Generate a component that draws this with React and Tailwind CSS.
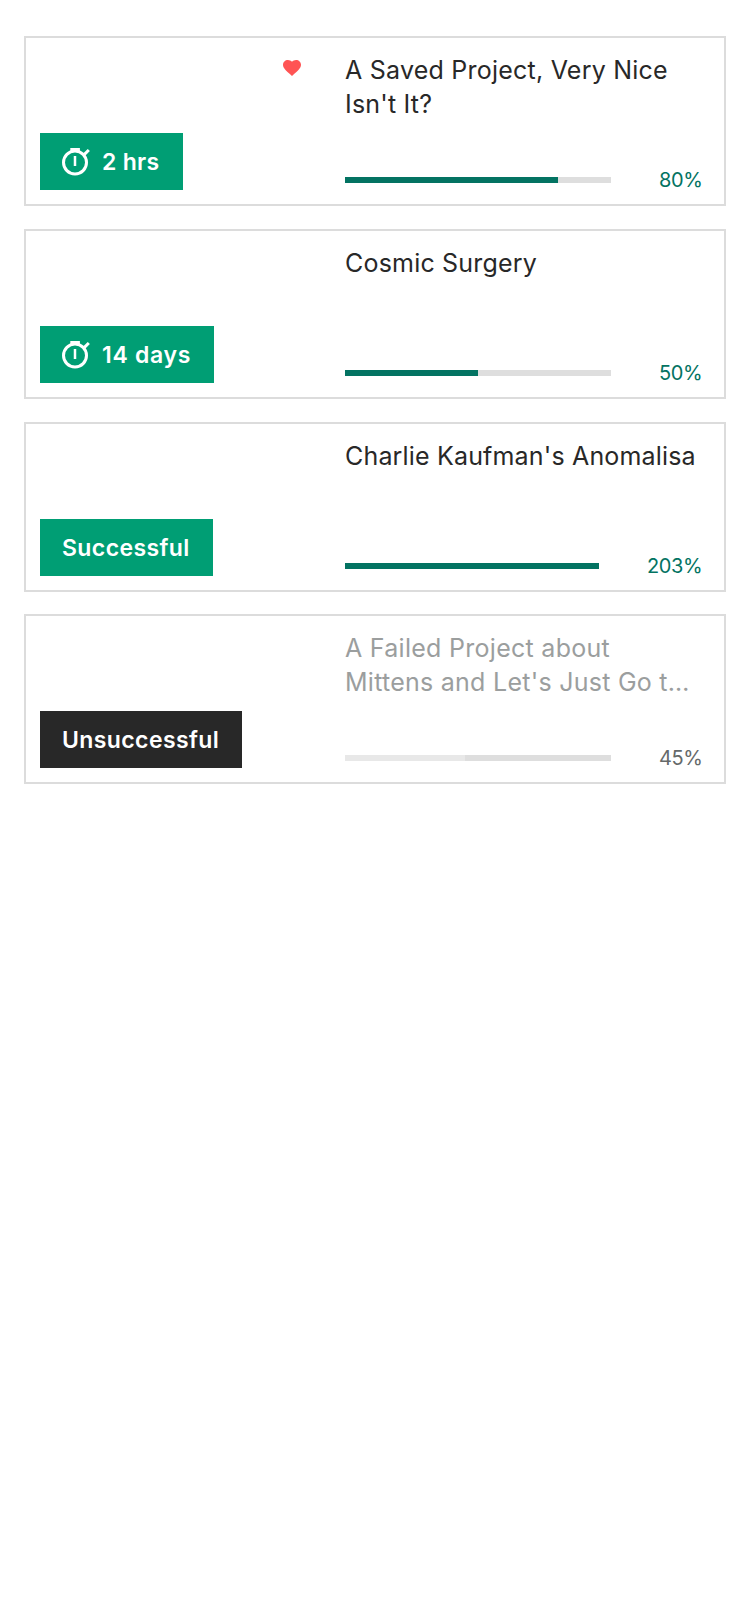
const projects = [
  {
    lines: [
      { text: "A Saved Project, Very Nice", tracking: "tracking-[0.23px]" },
      { text: "Isn't It?", tracking: "tracking-[0.2px]" },
    ],
    badge: "2 hrs",
    badgeStyle: "w-[143px] tracking-[0.3px]",
    timer: true,
    saved: true,
    percent: 80,
    offset: "mt-0",
  },
  {
    lines: [{ text: "Cosmic Surgery", tracking: "tracking-[0.2px]" }],
    badge: "14 days",
    badgeStyle: "w-[174px] tracking-[0.7px]",
    timer: true,
    percent: 50,
    offset: "mt-[23px]",
  },
  {
    lines: [{ text: "Charlie Kaufman's Anomalisa", tracking: "tracking-[0.17px]" }],
    badge: "Successful",
    badgeStyle: "w-[173px] tracking-[0.4px]",
    percent: 203,
    offset: "mt-[23px]",
  },
  {
    lines: [
      { text: "A Failed Project about", tracking: "tracking-[0.28px]" },
      { text: "Mittens and Let's Just Go t…", tracking: "tracking-[0.26px]" },
    ],
    badge: "Unsuccessful",
    badgeStyle: "w-[202px] tracking-[0.4px]",
    failed: true,
    percent: 45,
    offset: "mt-[22px]",
  },
];

function Stopwatch() {
  return (
    <svg className="mr-3 mb-[3px] h-[31px] w-[28px] shrink-0" viewBox="0 0 28 31" fill="none" stroke="white">
      <circle cx="13" cy="16.5" r="11.5" strokeWidth="3" />
      <path d="M8.3 3.6h9.6" strokeWidth="3.2" />
      <path d="M22.4 8.4l4.4-4.4" strokeWidth="3" />
      <path d="M13 10v10" strokeWidth="2.5" />
    </svg>
  );
}

function Heart() {
  return (
    <svg className="mt-[22px] mr-[44px] h-[16px] w-[18px]" viewBox="2 3 20 18.35" preserveAspectRatio="none" fill="#ff5454">
      <path d="M12 21.35l-1.45-1.32C5.4 15.36 2 12.28 2 8.5 2 5.42 4.42 3 7.5 3c1.74 0 3.41.81 4.5 2.09C13.09 3.81 14.76 3 16.5 3 19.58 3 22 5.42 22 8.5c0 3.78-3.4 6.86-8.55 11.54L12 21.35z" />
    </svg>
  );
}

function ProjectCard({ project }) {
  const { lines, badge, badgeStyle, timer, saved, failed, percent, offset } = project;
  return (
    <article className={`flex h-[170px] border-2 border-[#dcdcdc] bg-white ${offset}`}>
      <div className="flex w-[319px] shrink-0 flex-col justify-between pb-[14px] pl-[14px]">
        <div className="flex justify-end">{saved && <Heart />}</div>
        <div
          className={`flex h-[57px] items-center pt-[2px] pl-[22px] text-[23px] font-semibold whitespace-nowrap text-white ${badgeStyle} ${failed ? "bg-[#282828]" : "bg-[#009e74]"}`}
        >
          {timer && <Stopwatch />}
          {badge}
        </div>
      </div>
      <div className="flex min-w-0 flex-1 flex-col justify-between pt-[15px] pr-[22px] pb-[12px]">
        <h2 className={`text-[25px] leading-[34px] whitespace-nowrap ${failed ? "text-[#9b9e9e]" : "text-[#282828]"}`}>
          {lines.map((line) => (
            <span key={line.text} className={`block ${line.tracking}`}>
              {line.text}
            </span>
          ))}
        </h2>
        <div className="flex h-6 items-center gap-12">
          <div className="h-[6px] flex-1 bg-[#dedede]">
            <div
              className={`h-full ${failed ? "bg-[#e8e8e8]" : "bg-[#037362]"}`}
              style={{ width: `${Math.min(percent, 100)}%` }}
            />
          </div>
          <span
            className={`text-[20px] leading-6 tracking-[-0.4px] ${percent > 99 ? "w-[55px]" : "w-[43px]"} ${failed ? "text-[#656969]" : "text-[#037362]"}`}
          >
            {percent}%
          </span>
        </div>
      </div>
    </article>
  );
}

export default function App() {
  return (
    <main className="min-h-screen bg-white px-6 pt-9 font-['Inter',sans-serif]">
      {projects.map((project) => (
        <ProjectCard key={project.badge} project={project} />
      ))}
    </main>
  );
}
